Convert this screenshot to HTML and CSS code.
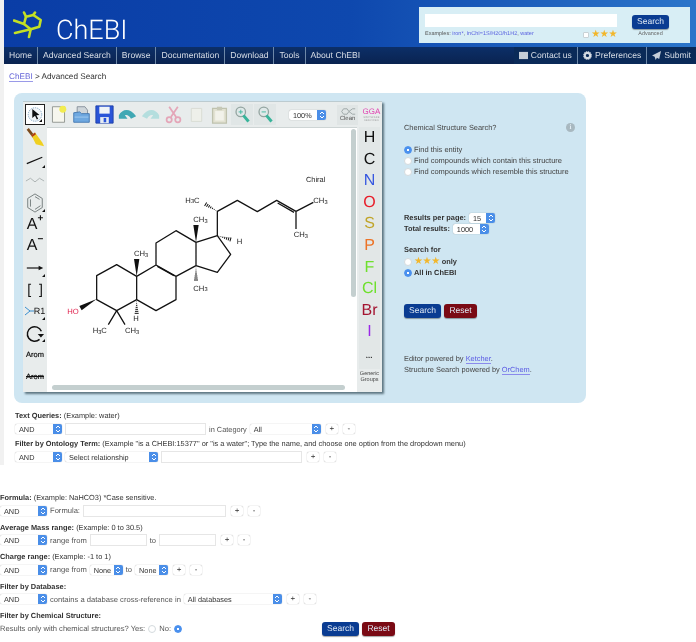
FILE: index.html
```html
<!DOCTYPE html>
<html lang="en">
<head>
<meta charset="utf-8">
<title>ChEBI Advanced Search</title>
<link rel="stylesheet" href="styles.css">
</head>
<body>
<svg class="defs" aria-hidden="true"><symbol id="chev" viewBox="0 0 6 8"><path d="M1 3l2-2 2 2M1 5l2 2 2-2" fill="none" stroke="#fff" stroke-width="1"/></symbol><symbol id="hash" viewBox="-8 0 16 48" overflow="visible"><path d="M-.6 5h1.2M-1.2 11h2.4M-2 17h4M-3 23h6M-4 29h8M-5 35h10M-6 41h12" stroke="#111" stroke-width="3" fill="none"/></symbol></svg>
<div class="upper">
  <header class="masthead">
    <div class="brand">
      <svg class="logo" viewBox="0 0 32 30"><g fill="none" stroke="#c4e024" stroke-width="2.6" stroke-linecap="round" stroke-linejoin="round"><path d="M20.300 4l7.400 5-1.400 6.700-8.600 2.600L11 13l2-7.300z"/><path d="M11 13L1 9.500M17.700 18.300L2 22M17.700 18.300L16 26M13 5.700L11 1.500M20.300 4L22 1.500"/></g></svg>
      <span class="brand-name">ChEBI</span>
    </div>
    <form class="quick">
      <div class="quick-main">
        <div class="quick-input"></div>
        <div class="quick-foot"><span>Examples: <a>iron*</a>, <a>InChI=1S/H2O/h1H2</a>, <a>water</a></span><span class="quick-stars"><i class="box"></i><b class="stars">★★★</b></span></div>
      </div>
      <div class="quick-side"><span class="btn btn-blue">Search</span><span class="adv">Advanced</span></div>
    </form>
  </header>
  <nav class="nav">
    <div class="nav-left"><a>Home</a><a>Advanced Search</a><a>Browse</a><a>Documentation</a><a>Download</a><a>Tools</a><a>About ChEBI</a></div>
    <div class="nav-right">
      <a><svg viewBox="0 0 10 8"><path fill="#c6ced8" d="M0 0h10v8H0z"/></svg>Contact us</a>
      <a><svg viewBox="0 0 10 10"><circle cx="5" cy="5" r="3" fill="none" stroke="#d6dce4" stroke-width="2.4"/><circle cx="5" cy="5" r="4.6" fill="none" stroke="#d6dce4" stroke-width=".9" stroke-dasharray="1.4 1"/></svg>Preferences</a>
      <a><svg viewBox="0 0 10 10"><path fill="#c6ced8" d="M10 0L0 5l3 1.400 1 3.600 1.500-2.500L8 9z"/></svg>Submit</a>
    </div>
  </nav>
  <p class="crumb"><a>ChEBI</a> &gt; Advanced Search</p>
  <section class="panel">
    <div class="editor">
      <div class="topbar">
        <span class="tool tool-on more"><svg viewBox="0 0 20 20"><circle cx="10" cy="10" r="7.500" fill="#f2f5f8" stroke="#7aa0c0" stroke-dasharray="1.500 1"/><path d="M7 4l0 10 3-2.500 2 4 1.500-.8-2-3.800 3.500-.4z" fill="#111"/></svg></span>
        <span class="tool"><svg viewBox="0 0 22 22"><path d="M4 2h14v18H4z" fill="#f6f6ee" stroke="#8a8f8a"/><circle cx="16" cy="5" r="4" fill="#f2ec50"/></svg></span>
        <span class="tool"><svg viewBox="0 0 22 22"><path d="M6 2h9l3 4v6H6z" fill="#cfd6da" stroke="#7f8a94"/><path d="M2 9l7-1 2 2h9v10H2z" fill="#6ea8e0" stroke="#3f74ae"/><path d="M3 14h16" stroke="#a6cdf0"/></svg></span>
        <span class="tool"><svg viewBox="0 0 22 22"><path d="M1 1h20v20H1z" fill="#2a55d8" stroke="#1c3ea4"/><path d="M5 2h12v8H5z" fill="#f0f4f8"/><path d="M6 14h10v7H6z" fill="#e6ecf2"/><path d="M10 15h3v5h-3z" fill="#2a55d8"/></svg></span>
        <span class="tool"><svg viewBox="0 0 22 22"><path d="M1 12c4-8 13-9 20 1l-6 3c-2-4-5-5-7-4l3 4H1z" fill="#40a8b4"/></svg></span>
        <span class="tool"><svg viewBox="0 0 22 22"><path d="M21 12c-4-8-13-9-20 1l6 3c2-4 5-5 7-4l-3 4h10z" fill="#b4dede"/></svg></span>
        <span class="tool"><svg viewBox="0 0 22 22"><g fill="none" stroke="#e4a6b8" stroke-width="2"><path d="M6 2l8 12M16 2L8 14"/><circle cx="6" cy="17" r="3"/><circle cx="16" cy="17" r="3"/></g></svg></span>
        <span class="tool"><svg viewBox="0 0 22 22"><path d="M5 4h12v15H5z" fill="#eef0ea" stroke="#d6dad2"/></svg></span>
        <span class="tool"><svg viewBox="0 0 22 22"><path d="M3 4h16v17H3z" fill="#e2e2d2" stroke="#bfc2ae" stroke-width="1.500"/><path d="M6 7h10v11H6z" fill="#f2f2ea"/><path d="M8 2h6v4H8z" fill="#c6c8b6"/></svg></span>
        <span class="tool tool-shade"><svg viewBox="0 0 22 22"><circle cx="9" cy="8" r="5.500" fill="#dfe8e8" stroke="#93a4a0" stroke-width="1.500"/><path d="M12 12l6 7" stroke="#38b49a" stroke-width="3.500"/><path d="M6.500 8h5M9 5.500v5" stroke="#38b49a"/></svg></span>
        <span class="tool tool-shade"><svg viewBox="0 0 22 22"><circle cx="9" cy="8" r="5.500" fill="#dfe8e8" stroke="#93a4a0" stroke-width="1.500"/><path d="M12 12l6 7" stroke="#38b49a" stroke-width="3.500"/><path d="M6.500 8h5" stroke="#38b49a"/></svg></span>
        <span class="select sel-zoom"><span>100%</span><i class="cap"><svg><use href="#chev"/></svg></i></span>
        <span class="tool-clean"><svg viewBox="0 0 20 10"><path d="M3 5l2-3h4l2 3-2 3H5zM11 5l4-3M11 5l4 3M15 2h3M15 8h3" fill="none" stroke="#9aa4a4"/></svg>Clean</span>
        <span class="gga"><b>GGA</b><small>SOFTWARE SERVICES</small></span>
      </div>
      <div class="leftbar">
        <span class="tool"><svg viewBox="0 0 22 22"><path d="M3 1l7 9" stroke="#7a4a1c" stroke-width="3"/><path d="M7 8l4-3 8 11 2 4-9-2z" fill="#f0d020"/><path d="M7 8l4-3 1 2-4 3z" fill="#b03a18"/></svg></span>
        <span class="tool more"><svg viewBox="0 0 22 22"><path d="M2 15l17-7" stroke="#111" stroke-width="1.300"/></svg></span>
        <span class="tool"><svg viewBox="0 0 22 22"><path d="M1 11l5-3 5 4 5-4 5 3" fill="none" stroke="#a8b0b0"/></svg></span>
        <span class="tool more"><svg viewBox="0 0 22 22"><path d="M11 1l8 5v10l-8 5-8-5V6z" fill="#e8ecec" stroke="#707878"/><path d="M6 7v8M11 18l6-4M11 4l5 3" fill="none" stroke="#707878"/></svg></span>
        <span class="tool t-txt">A<sup>+</sup></span>
        <span class="tool t-txt">A<sup>−</sup></span>
        <span class="tool more"><svg viewBox="0 0 22 22"><path d="M2 11h15" stroke="#111" stroke-width="1.300"/><path d="M20 11l-5-2.500v5z" fill="#111"/></svg></span>
        <span class="tool t-brk">[ &nbsp;]</span>
        <span class="tool more t-r"><svg viewBox="0 0 9 10"><path d="M0 1l5 4-5 4M5 5h4" fill="none" stroke="#3a90d0"/></svg>R1</span>
        <span class="tool more"><svg viewBox="0 0 22 22"><path d="M16 18a8 8 0 1 1 2-9" fill="none" stroke="#111" stroke-width="1.600"/><path d="M14 12h7l-3.500 4z" fill="#111"/></svg></span>
        <span class="tool t-arom">Arom</span>
        <span class="tool t-arom"><s>Arom</s></span>
      </div>
      <div class="canvas">
        <svg class="molecule" viewBox="0 0 870 510">
          <g fill="none" stroke="#111" stroke-width="3.800" stroke-linejoin="round">
            <path d="M110 362V290L170 257 230 292V362L170 395zM230 292L288 258 348 292V362L288 395 230 362M288 258V192L348 155 408 190V260L348 292M408 190L472 170 512 226 472 280 408 260M472 170V97L532 64 592 98 650 64 708 97 760 70M708 97V150M170 395L145 437M170 395L195 437"/>
            <path d="M292 262L342 290M653 72L702 100"/>
          </g>
          <path d="M110 360L58 381 65 394zM230 292L222 240H238zM408 190L400 138H416z" fill="#111"/>
          <use href="#hash" width="16" height="48" transform="translate(222 362)"/>
          <use href="#hash" width="16" height="48" transform="translate(400 262)"/>
          <g transform="translate(472 170) rotate(-74)"><use href="#hash" x="-8" width="16" height="48"/></g>
          <g transform="translate(472 97) rotate(121)"><use href="#hash" x="-8" width="16" height="48"/></g>
          <g class="atoms">
            <text x="22" y="404" class="red">HO</text>
            <text x="98" y="462">H<tspan class="sub" dy="2">3</tspan><tspan dy="-2">C</tspan></text>
            <text x="195" y="462">CH<tspan class="sub" dy="2">3</tspan></text>
            <text x="220" y="425">H</text>
            <text x="222" y="232">CH<tspan class="sub" dy="2">3</tspan></text>
            <text x="400" y="129">CH<tspan class="sub" dy="2">3</tspan></text>
            <text x="400" y="335">CH<tspan class="sub" dy="2">3</tspan></text>
            <text x="530" y="195">H</text>
            <text x="376" y="71">H<tspan class="sub" dy="2">3</tspan><tspan dy="-2">C</tspan></text>
            <text x="760" y="73">CH<tspan class="sub" dy="2">3</tspan></text>
            <text x="701" y="175">CH<tspan class="sub" dy="2">3</tspan></text>
          </g>
        </svg>
        <span class="chiral">Chiral</span>
        <i class="scroll-v"></i><i class="scroll-h"></i>
      </div>
      <div class="rightbar">
        <span class="el e-h">H</span><span class="el e-c">C</span><span class="el e-n">N</span><span class="el e-o">O</span><span class="el e-s">S</span><span class="el e-p">P</span><span class="el e-f">F</span><span class="el e-cl">Cl</span><span class="el e-br">Br</span><span class="el e-i">I</span>
        <span class="el e-more">•••</span>
        <span class="generic">Generic Groups</span>
      </div>
    </div>
    <aside class="side">
      <div class="side-title"><span>Chemical Structure Search?</span><i class="info">i</i></div>
      <div class="opts">
        <label class="opt"><i class="radio on"></i>Find this entity</label>
        <label class="opt"><i class="radio"></i>Find compounds which contain this structure</label>
        <label class="opt"><i class="radio"></i>Find compounds which resemble this structure</label>
      </div>
      <div class="res">
        <div class="res-row"><b>Results per page:</b><span class="select sel-15"><span>15</span><i class="cap"><svg><use href="#chev"/></svg></i></span></div>
        <div class="res-row"><b>Total results:</b><span class="select sel-1000"><span>1000</span><i class="cap"><svg><use href="#chev"/></svg></i></span></div>
      </div>
      <div class="searchfor">
        <b>Search for</b>
        <label class="opt"><i class="radio"></i><b class="stars">★★★</b><b>only</b></label>
        <label class="opt"><i class="radio on"></i><b>All in ChEBI</b></label>
      </div>
      <div class="btns"><span class="btn btn-blue">Search</span><span class="btn btn-red">Reset</span></div>
      <p class="powered">Editor powered by <a>Ketcher</a>.<br>Structure Search powered by <a>OrChem</a>.</p>
    </aside>
  </section>
  <div class="queries">
    <p class="lbl"><b>Text Queries:</b> (Example: water)</p>
    <div class="row">
      <span class="select sel-and"><span>AND</span><i class="cap"><svg><use href="#chev"/></svg></i></span>
      <i class="field f-141"></i><span class="t t-cat">in Category</span>
      <span class="select sel-all"><span>All</span><i class="cap"><svg><use href="#chev"/></svg></i></span>
      <span class="pm">+</span><span class="pm">-</span>
    </div>
    <p class="lbl"><b>Filter by Ontology Term:</b> (Example "is a CHEBI:15377" or "is a water"; Type the name, and choose one option from the dropdown menu)</p>
    <div class="row">
      <span class="select sel-and"><span>AND</span><i class="cap"><svg><use href="#chev"/></svg></i></span>
      <span class="select sel-rel"><span>Select relationship</span><i class="cap"><svg><use href="#chev"/></svg></i></span>
      <i class="field f-141"></i>
      <span class="pm">+</span><span class="pm">-</span>
    </div>
  </div>
</div>
<main class="lower">
  <p class="lbl"><b>Formula:</b> (Example: NaHCO3) *Case sensitive.</p>
  <div class="row">
    <span class="select sel-and"><span>AND</span><i class="cap"><svg><use href="#chev"/></svg></i></span>
    <span class="t">Formula:</span><i class="field f-143"></i>
    <span class="pm">+</span><span class="pm">-</span>
  </div>
  <p class="lbl"><b>Average Mass range:</b> (Example: 0 to 30.5)</p>
  <div class="row">
    <span class="select sel-and"><span>AND</span><i class="cap"><svg><use href="#chev"/></svg></i></span>
    <span class="t">range from</span><i class="field f-57"></i><span class="t">to</span><i class="field f-57"></i>
    <span class="pm">+</span><span class="pm">-</span>
  </div>
  <p class="lbl"><b>Charge range:</b> (Example: -1 to 1)</p>
  <div class="row">
    <span class="select sel-and"><span>AND</span><i class="cap"><svg><use href="#chev"/></svg></i></span>
    <span class="t">range from</span>
    <span class="select sel-none"><span>None</span><i class="cap"><svg><use href="#chev"/></svg></i></span>
    <span class="t">to</span>
    <span class="select sel-none"><span>None</span><i class="cap"><svg><use href="#chev"/></svg></i></span>
    <span class="pm">+</span><span class="pm">-</span>
  </div>
  <p class="lbl"><b>Filter by Database:</b></p>
  <div class="row">
    <span class="select sel-and"><span>AND</span><i class="cap"><svg><use href="#chev"/></svg></i></span>
    <span class="t">contains a database cross-reference in</span>
    <span class="select sel-db"><span>All databases</span><i class="cap"><svg><use href="#chev"/></svg></i></span>
    <span class="pm">+</span><span class="pm">-</span>
  </div>
  <p class="lbl"><b>Filter by Chemical Structure:</b></p>
  <div class="row row-last">
    <span class="t">Results only with chemical structures? Yes:</span><i class="radio"></i>
    <span class="t">No:</span><i class="radio on"></i>
    <div class="btns btns-low"><span class="btn btn-blue">Search</span><span class="btn btn-red">Reset</span></div>
  </div>
</main>
</body>
</html>
```
FILE: styles.css
```css
* { box-sizing: border-box; }
html, body { margin: 0; padding: 0; }
body { background: #fff; color: #333; font: 7.400px/11px "Liberation Sans", Arial, sans-serif; text-rendering: geometricPrecision; width: 696px; height: 642px; overflow: hidden; filter: blur(.3px); }
p { margin: 0; }
i { font-style: normal; }
.defs { position: absolute; width: 0; height: 0; }

.upper { height: 465px; border-left: 4px solid #f1f1f1; }
.masthead { height: 47px; display: flex; justify-content: space-between; background: linear-gradient(90deg, #0a3da6 0%, #0e48ae 50%, #2b75ca 100%); padding: 7px 6px 4px 9px; }
.brand { display: flex; align-items: flex-start; }
.logo { width: 32px; height: 30px; margin-top: 4px; }
.brand-name { color: #fff; font: 300 27px/30px Roboto, sans-serif; margin: 8px 0 0 11px; }
.quick { width: 271px; background: #d8eef5; display: flex; padding: 7px 0 0 6px; }
.quick-main { width: 192px; }
.quick-input { height: 13px; background: #fff; }
.quick-foot { display: flex; justify-content: space-between; align-items: center; margin-top: 2px; font-size: 5.500px; line-height: 11px; color: #555; }
.quick-foot a { color: #5a62e0; }
.quick-stars { display: flex; align-items: center; gap: 2px; }
.box { width: 6px; height: 6px; background: #fff; border: 1px solid #c8d2d6; border-radius: 1px; }
.stars { color: #f2b62a; font: 10px/9px "DejaVu Sans", sans-serif; letter-spacing: -.4px; }
.quick-side { display: flex; flex-direction: column; align-items: center; margin-left: 15px; width: 37px; padding-top: 1px; }
.adv { font-size: 5.500px; line-height: 11px; color: #666; }

.btn { display: inline-block; height: 14px; border-radius: 3px; color: #dfe8f4; font-size: 8.500px; line-height: 13px; text-align: center; box-shadow: 0 1px 1px rgba(0,0,0,.35); }
.btn-blue { width: 37px; background: #0a3c92; }
.btn-red { width: 33px; background: #7a0a14; }

.nav { height: 17px; display: flex; justify-content: space-between; background: linear-gradient(#0c2f68, #0a2350); color: #d7dde6; font-size: 8.600px; line-height: 17px; }
.nav a { display: block; }
.nav-left { display: flex; }
.nav-left a { padding: 0 5px; border-right: 1px solid #6d88a8; }
.nav-left a:last-child { border: 0; }
.nav-right { display: flex; background: #0a2a58; }
.nav-right a { display: flex; align-items: center; gap: 3px; padding: 0 5px; border-right: 1px solid #6d88a8; }
.nav-right a:last-child { border: 0; }
.nav-right svg { width: 9px; height: 9px; }

.crumb { margin: 7px 0 0 5px; font-size: 8.200px; line-height: 11px; color: #333; }
.crumb a { color: #6464d8; border-bottom: 1px solid #9a9ae8; }

.panel { margin: 11px 0 0 10px; width: 572px; height: 310px; background: #cfe6f2; border-radius: 8px; padding: 8px 0 0 9px; display: flex; }
.editor { flex: none; width: 359px; height: 291px; background: #e8ecec; border-top: 1px solid #bccbd0; box-shadow: 2px 2px 2px #5e7682; display: grid; grid-template-columns: 24px 1fr 25px; grid-template-rows: 25px 1fr; }

.topbar { grid-column: 1 / -1; display: flex; align-items: center; padding-left: 2px; gap: 1px; }
.tool { flex: none; width: 22px; height: 21.700px; display: flex; align-items: center; justify-content: center; position: relative; color: #111; }
.topbar .tool svg { width: 19px; height: 19px; }
.topbar .tool:first-child { margin-right: 1px; width: 20px; }
.tool-on { background: #fff; border: 1px solid #222; }
.tool-shade { background: #e0e6e6; }
.sel-zoom { margin-left: 12px; margin-right: 10px; width: 37px; }
.tool-clean { width: 21px; display: flex; flex-direction: column; align-items: center; font-size: 6px; line-height: 7px; color: #555; background: #e0e5e5; padding: 2px 0; }
.tool-clean svg { width: 18px; height: 9px; }
.gga { width: 21px; margin-left: 2px; text-align: center; color: #e040b0; }
.gga b { display: block; font-weight: 400; font-size: 8px; line-height: 9px; }
.gga small { display: block; color: #999; font-size: 2.500px; line-height: 3px; letter-spacing: .3px; }

.leftbar { display: flex; flex-direction: column; }
.leftbar .tool { width: 24px; }
.leftbar svg { width: 20px; height: 20px; }
.more::after { content: ""; position: absolute; right: 2px; bottom: 2px; border-left: 3px solid transparent; border-bottom: 3px solid #111; }
.t-txt { font-size: 16px; line-height: 18px; }
.t-txt sup { font-size: 10px; line-height: 10px; margin-bottom: 7px; align-self: flex-start; font-weight: 700; }
.t-brk { font-size: 14px; }
.t-r { font-size: 9px; }
.leftbar .t-r svg { width: 9px; height: 10px; }
.t-arom { font-size: 7.500px; -webkit-text-stroke: .2px #111; }

.canvas { position: relative; background: #fff; border-top: 1px solid #cdd4d4; height: 265px; }
.molecule { position: absolute; left: 13px; top: 51px; width: 290px; height: 170px; }
.atoms { font: 23px "Liberation Sans", sans-serif; fill: #222; }
.sub { font-size: 17px; }
.red { fill: #e0204c; }
.chiral { position: absolute; left: 259px; top: 46px; font-size: 7.400px; color: #222; }
.scroll-v { position: absolute; right: 1px; top: 1px; width: 5px; height: 168px; background: #c4cfcf; border-radius: 3px; }
.scroll-h { position: absolute; left: 5px; bottom: 2px; width: 293px; height: 5px; background: #c4cfcf; border-radius: 3px; }

.rightbar { display: flex; flex-direction: column; align-items: center; }
.el { width: 21px; height: 21.600px; flex: none; text-align: center; font-size: 16px; line-height: 21px; background: #e2e7e7; }
.e-h, .e-c { color: #111; }
.e-n { color: #3858e0; }
.e-o { color: #e81c28; }
.e-s { color: #c0a428; }
.e-p { color: #ec7428; }
.e-f, .e-cl { color: #6ee02c; }
.e-br { color: #a41430; }
.e-i { color: #9a28e8; }
.e-more { font-size: 5px; color: #222; line-height: 30px; height: 26px; letter-spacing: .5px; }
.generic { font-size: 5.500px; line-height: 6.500px; color: #444; text-align: center; margin-top: 2px; }

.side { flex: none; margin-left: 22px; width: 172px; padding-top: 21px; color: #444; white-space: nowrap; }
.side-title { display: flex; justify-content: space-between; align-items: center; }
.info { width: 9px; height: 9px; border-radius: 50%; background: #a8b8c0; color: #e4eef4; font: 700 7px/9px "Liberation Serif", serif; text-align: center; margin-right: 1px; }
.opts { margin-top: 11px; font-size: 7.500px; }
.opt { display: flex; align-items: center; gap: 2px; color: #444; height: 11px; }
.radio { flex: none; display: inline-block; width: 8px; height: 8px; border-radius: 50%; background: #fff; border: 1px solid #d4dadd; }
.radio.on { background: radial-gradient(circle, #fff 0 1.200px, #4a90ee 1.500px); border-color: #4a90ee; }
.res { margin-top: 35px; color: #333; }
.res-row { display: flex; align-items: center; gap: 3px; height: 11px; }
.sel-15 { width: 26px; }
.sel-1000 { width: 36px; }
.searchfor { margin-top: 10px; color: #333; }
.searchfor > b { display: block; height: 12px; }
.searchfor .opt { color: #333; }
.btns { display: flex; gap: 3px; margin-top: 26px; }
.powered { margin-top: 35px; color: #444; }
.powered a { color: #5a5ae4; border-bottom: 1px solid #8a8aec; }

.queries { padding: 7px 0 0 11px; }
.lbl { line-height: 11px; color: #333; }
.row { display: flex; align-items: center; height: 12px; margin: 2px 0 3px; gap: 3px; color: #555; }
.t { flex: none; font-size: 7.600px; }
.t-cat { font-size: 7.400px; }
.select { flex: none; display: inline-flex; justify-content: space-between; align-items: flex-start; height: 10px; background: #fff; border-radius: 2px; box-shadow: 0 0 1px rgba(0,0,0,.4); font-size: 7.300px; line-height: 10px; color: #333; padding-left: 4px; overflow: hidden; }
.select > span { padding-top: 1px; }
.cap { width: 9px; height: 10px; background: #4a8ee8; display: flex; align-items: center; justify-content: center; }
.cap svg { width: 6px; height: 8px; }
.sel-and { width: 47px; }
.sel-all { width: 71px; }
.sel-rel { width: 93px; }
.sel-none { width: 33px; }
.sel-db { width: 98px; }
.field { flex: none; height: 12px; background: #fff; border: 1px solid #e6e6e6; }
.f-141 { width: 141px; }
.f-143 { width: 143px; }
.f-57 { width: 57px; }
.pm { flex: none; width: 12px; height: 10px; margin-left: 2px; border-radius: 2px; background: #fff; box-shadow: 0 0 1px rgba(0,0,0,.45); font-size: 8px; line-height: 10px; text-align: center; color: #333; }

.lower { padding-top: 27px; }
.lower .row { margin: 1.500px 0 5px; }
.btns-low { margin: 0 0 0 137px; }
```
